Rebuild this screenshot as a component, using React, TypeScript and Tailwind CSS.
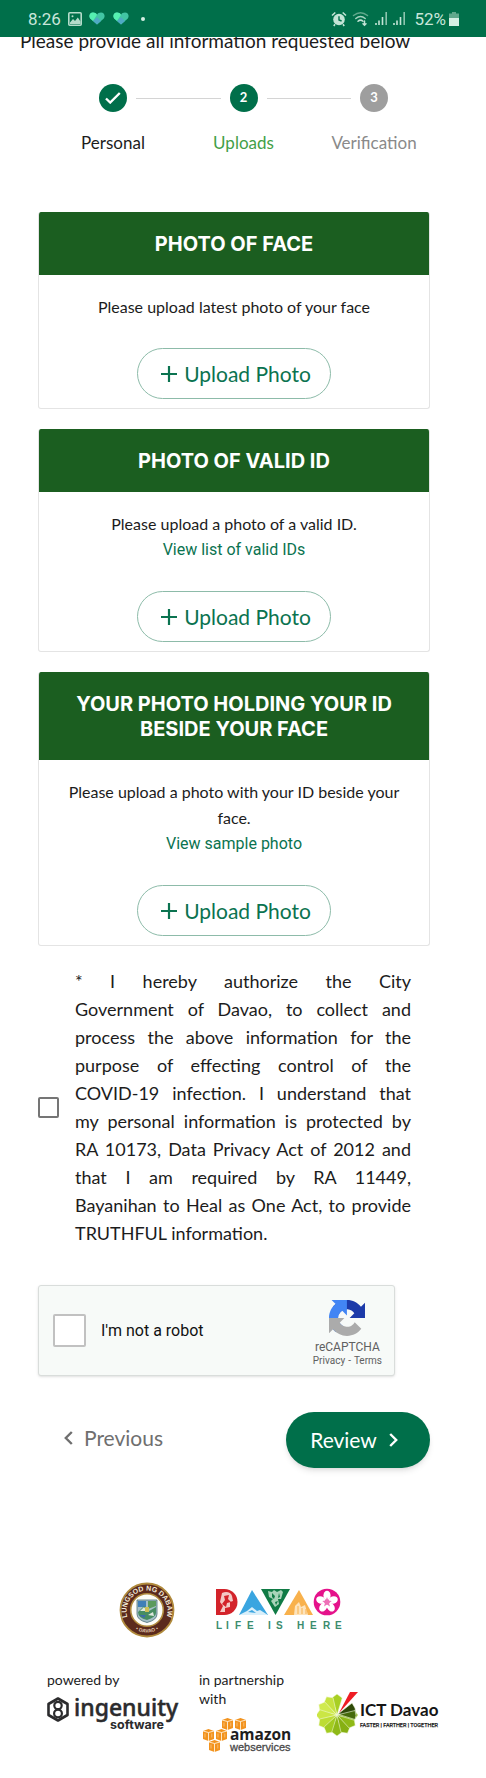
import type { ReactNode } from "react";

function StatusBar() {
  return (
    <header className="sticky top-0 z-10 flex h-[37px] items-center justify-between bg-[#006f4a] pl-7 pr-[27px] font-['Roboto',sans-serif] text-[17px] text-[#c9e6da]">
      <div className="flex items-center gap-[7px]">
        <span className="leading-5">8:26</span>
        <svg viewBox="0 0 14 14" className="h-[14px] w-[14px]" aria-hidden="true">
          <rect x="0.8" y="0.8" width="12.4" height="12.4" rx="1" fill="none" stroke="#b5dccb" strokeWidth="1.6" />
          <path d="M2 10.5 5 7l2 2 2.800-3.500L12.500 9.500V12H2z" fill="#b5dccb" />
          <circle cx="4.500" cy="4.300" r="1" fill="#b5dccb" />
        </svg>
        <HeartIcon />
        <HeartIcon />
        <span className="ml-1 h-1 w-1 rounded-full bg-[#d5efe4]" />
      </div>
      <div className="flex items-center gap-[5px]">
        <svg viewBox="0 0 16 16" className="h-4 w-4" aria-hidden="true">
          <circle cx="8" cy="8.500" r="5.800" fill="#c3e4d6" />
          <path d="M1 4.500 4.300 1.500M15 4.500 11.700 1.500M4 13.300 2.800 15M12 13.300 13.200 15" stroke="#c3e4d6" strokeWidth="1.600" />
          <path d="M8 5.200V9l2.600 1" fill="none" stroke="#006f4a" strokeWidth="1.400" />
        </svg>
        <svg viewBox="0 0 18 16" className="h-4 w-[18px]" fill="none" strokeLinecap="round" aria-hidden="true">
          <path d="M1.500 4.500Q8.500-1 15.500 4.500" stroke="#5fa88c" strokeWidth="1.500" />
          <path d="M3.800 7.500Q8.500 3.500 13.200 7.500" stroke="#a5d3c0" strokeWidth="1.500" />
          <path d="M6 10.300Q8.500 8 11 10.300" stroke="#c3e4d6" strokeWidth="1.500" />
          <path d="M12.500 10v4m-1.500-1.300 1.500 1.500 1.500-1.500" stroke="#c3e4d6" strokeWidth="1.500" />
        </svg>
        <SignalIcon />
        <SignalIcon />
        <span className="ml-[3px] leading-5">52%</span>
        <svg viewBox="0 0 10 14" className="-ml-[2px] h-[14px] w-[10px]" aria-hidden="true">
          <path d="M3 0h4v1.500h3V14H0V1.500h3z" fill="#5fa88c" />
          <path d="M0 6h10v8H0z" fill="#d5efe4" />
        </svg>
      </div>
    </header>
  );
}

function HeartIcon() {
  return (
    <svg viewBox="0 0 16 13" className="mr-px h-[13px] w-4" aria-hidden="true">
      <path d="M8 12.500 1.200 6.400C-.6 4 .8.500 4 .5c1.800 0 3.200.9 4 2.200C8.800 1.400 10.200.5 12 .5c3.200 0 4.600 3.500 2.800 5.900z" fill="#42c5a4" />
      <path d="M8 2.700C7.200 1.400 5.800.5 4 .5.800.5-.6 4 1.200 6.400L4 9z" fill="#55f0b0" />
      <path d="M4 9 8 5.200 12 9l-4 3.500z" fill="#4fa9c4" />
    </svg>
  );
}

function SignalIcon() {
  return (
    <svg viewBox="0 0 13 13" className="h-[13px] w-[13px]" aria-hidden="true">
      <path d="M1 11v2M4 8.500V13M7.500 5v8" stroke="#c3e4d6" strokeWidth="1.600" />
      <path d="M11.200 0v13" stroke="#8cc4ae" strokeWidth="1.600" />
    </svg>
  );
}

type StepProps = { label: string; circle: string; text: string; children: ReactNode };

function Step({ label, circle, text, children }: StepProps) {
  return (
    <li className="flex w-[84px] flex-col items-center">
      <span className={`flex h-7 w-7 items-center justify-center rounded-full text-[13px] font-bold text-white ${circle}`}>
        {children}
      </span>
      <span className={`mt-[19px] text-[17px] leading-6 ${text}`}>{label}</span>
    </li>
  );
}

function Stepper() {
  const line = "mt-[14px] -mx-[19px] h-px flex-1 bg-[#d4d4d4]";
  return (
    <ol className="mt-[30px] flex pl-[71px] pr-[70px]">
      <Step label="Personal" circle="bg-[#006f4a]" text="text-[#1c1c1c]">
        <svg viewBox="0 0 16 12" className="h-3 w-4" aria-hidden="true">
          <path d="m1 6.500 4.200 4L14.800 1" fill="none" stroke="white" strokeWidth="2.400" />
        </svg>
      </Step>
      <li aria-hidden="true" className={line} />
      <Step label="Uploads" circle="bg-[#006f4a]" text="text-[#43a047]">2</Step>
      <li aria-hidden="true" className={line} />
      <Step label="Verification" circle="bg-[#9e9e9e]" text="text-[#8a8a8a]">3</Step>
    </ol>
  );
}

type UploadCardProps = { title: string; text: string; link?: string };

function UploadCard({ title, text, link }: UploadCardProps) {
  return (
    <section className="overflow-hidden rounded-[3px] border border-t-0 border-[#e4e4e4]">
      <h2 className="bg-[#1b5e20] px-5 pb-[18px] pt-5 text-center font-['Inter',sans-serif] text-[20px] font-bold leading-[25px] text-white">
        {title}
      </h2>
      <div className="flex flex-col items-center px-5 pb-[9px] pt-[19px] text-center text-[16px] leading-[26px] text-[#1c1c1c]">
        <p>{text}</p>
        {link && (
          <a href="#" className="font-['Roboto',sans-serif] text-[#0b7350]">
            {link}
          </a>
        )}
        <button type="button" className="mt-7 flex h-[51px] w-[194px] items-center justify-center gap-[7px] rounded-full border border-[#8dbba9] pl-1 text-[21px] text-[#0b7350]">
          <svg viewBox="0 0 16 16" className="h-4 w-4" aria-hidden="true">
            <path d="M8 0v16M0 8h16" stroke="#0b7350" strokeWidth="2.200" />
          </svg>
          Upload Photo
        </button>
      </div>
    </section>
  );
}

function Recaptcha() {
  return (
    <div className="mt-[38px] flex h-[91px] max-w-[357px] items-center rounded-[3px] border border-[#d9dddb] bg-[#f7faf8] pl-[14px] pr-3 font-['Roboto',sans-serif] shadow-sm">
      <input id="robot" type="checkbox" className="h-[33px] w-[33px] appearance-none rounded-[2px] border-2 border-[#c1c1c1] bg-white" />
      <label htmlFor="robot" className="ml-[15px] flex-1 text-[16px] text-[#111]">I'm not a robot</label>
      <div className="flex flex-col items-center pt-[5px] text-[#606060]">
        <svg viewBox="0 0 64 64" className="h-9 w-9" aria-hidden="true">
          <path fill="#1c3aa9" d="M64 31.955l-.033-1.370V4.687l-7.160 7.160C50.948 4.674 42.033.093 32.050.093c-10.400 0-19.622 4.960-25.458 12.640l11.736 11.860a15.550 15.550 0 0 1 4.754-5.334c2.050-1.600 4.952-2.906 8.968-2.906.485 0 .860.057 1.135.163 4.976.393 9.288 3.140 11.828 7.124l-8.307 8.307L64 31.953" />
          <path fill="#4285f4" d="M31.862.094l-1.370.033H4.594l7.160 7.160C4.580 13.147 0 22.060 0 32.046c0 10.400 4.960 19.622 12.640 25.458L24.500 45.768a15.550 15.550 0 0 1-5.334-4.754c-1.600-2.050-2.906-4.952-2.906-8.968 0-.485.057-.860.163-1.135.393-4.976 3.140-9.288 7.124-11.828l8.307 8.307L31.860.095" />
          <path fill="#ababab" d="M.001 32.045l.033 1.370v25.898l7.160-7.160c5.860 7.173 14.774 11.754 24.760 11.754 10.400 0 19.622-4.960 25.458-12.640l-11.736-11.860a15.550 15.550 0 0 1-4.754 5.334c-2.050 1.600-4.952 2.906-8.968 2.906-.485 0-.860-.057-1.135-.163-4.976-.393-9.288-3.140-11.828-7.124l8.307-8.307c-10.522.040-22.400.066-27.295-.005" />
        </svg>
        <span className="mt-1 text-[12px] leading-[15px]">reCAPTCHA</span>
        <span className="flex gap-[3px] text-[10px] leading-3">
          <a href="#">Privacy</a>
          <span>-</span>
          <a href="#">Terms</a>
        </span>
      </div>
    </div>
  );
}

function CitySeal() {
  return (
    <svg viewBox="0 0 56 56" className="h-14 w-14" role="img" aria-label="Lungsod ng Dabaw">
      <defs>
        <path id="seal-top" d="M12 42A20.500 20.500 0 1 1 44 42" />
        <path id="seal-bottom" d="M12 44A23 23 0 0 0 44 44" />
      </defs>
      <circle cx="28" cy="28" r="26.500" fill="#5b2a1d" stroke="#b08a3c" strokeWidth="1.800" />
      <circle cx="28" cy="28" r="16.300" fill="#fdfdf8" stroke="#b08a3c" strokeWidth="1.600" />
      <text fill="#f3e9d8" fontSize="7" fontWeight="700" fontFamily="Liberation Sans">
        <textPath href="#seal-top" startOffset="50%" textAnchor="middle">LUNGSOD NG DABAW</textPath>
      </text>
      <text fill="#e3cdb4" fontSize="5" fontWeight="700" fontFamily="Liberation Sans">
        <textPath href="#seal-bottom" startOffset="50%" textAnchor="middle">• DAVAO •</textPath>
      </text>
      <path d="M18 18h20v14q0 6-10 8.500Q18 38 18 32z" fill="#a5c0c8" stroke="#4b6f77" strokeWidth=".8" />
      <path d="M19 19h8v6h-8z" fill="#3f7fb8" />
      <path d="M29 19h8v5l-8 3z" fill="#5b9a5c" />
      <path d="m19 30 6-6 5 5 7-4v6q0 4-9 7-9-2-9-8z" fill="#478d62" />
      <path d="m21 29 4-4 3 4zM29 33l5-3 1 4z" fill="#dfe8dd" />
      <path d="M26 25h4v5h-4z" fill="#cdbf55" />
      <path d="M20 33h7l-2 3z" fill="#3c6cab" />
    </svg>
  );
}

function DavaoLogo() {
  return (
    <svg viewBox="0 0 128 44" className="h-11 w-32" role="img" aria-label="Davao, life is here">
      <path d="M1 1h8.500a13 13 0 0 1 0 26H1z" fill="#d3232a" />
      <path d="M7 5c4-2 9-1 10 3l1 5-3 1v5l-5 1v4H5l3-6-3-4z" fill="#f3c9c6" />
      <path d="m9 8 5-1-1 4 3 3-4 1-1 4-4-3 3-4z" fill="#d3232a" />
      <path d="M37 2 53 27H24z" fill="#3aa5e0" />
      <path d="m24 27 8-4 5-4 5 4 3-1 8 5z" fill="#d9effa" />
      <path d="m33 24 4-2 4 3z" fill="#3aa5e0" />
      <path d="M46 1h29L60.500 27z" fill="#107b45" />
      <path d="m53 3 4 1 2-2 3 2 4-2 2 2-2 7h-3l1 5-4 3-4-6 2-2-4-2z" fill="#a9d3b8" />
      <path d="m57 5 3 3-1 3-2-2zM64 5l-1 5 2-1zM60 14l3-1-2 4z" fill="#107b45" />
      <path d="M84 2 98 27H69z" fill="#f8b14c" />
      <path d="m79 27 1-9 4-4 2 5 4-2 3 10z" fill="#fde3bb" />
      <path d="M83 18v8M87 20v6M91 21v5" stroke="#f8b14c" />
      <circle cx="112" cy="14" r="13.300" fill="#e5128b" />
      <g fill="#fff">
        <ellipse cx="112" cy="7.500" rx="3.600" ry="4.700" />
        <ellipse cx="112" cy="7.500" rx="3.600" ry="4.700" transform="rotate(72 112 14)" />
        <ellipse cx="112" cy="7.500" rx="3.600" ry="4.700" transform="rotate(144 112 14)" />
        <ellipse cx="112" cy="7.500" rx="3.600" ry="4.700" transform="rotate(216 112 14)" />
        <ellipse cx="112" cy="7.500" rx="3.600" ry="4.700" transform="rotate(288 112 14)" />
      </g>
      <path d="m112 9 1.300 3.500 3.500.5-2.800 2 1 3.500-3-2-3 2 1-3.500-2.800-2 3.500-.5z" fill="#ee70b7" />
      <g fill="#3b8c6d" fontSize="10" fontWeight="700" fontFamily="Liberation Sans">
        <text x="1 11 20 32" y="41">LIFE</text>
        <text x="53 61" y="41">IS</text>
        <text x="82 95 108 120" y="41">HERE</text>
      </g>
    </svg>
  );
}

function IngenuityLogo() {
  return (
    <svg viewBox="0 -8 136 44" className="h-11 w-[136px]" role="img" aria-label="ingenuity software">
      <g fill="none" stroke="#2b2b2d">
        <path d="M11 1.500 20.500 7v11L11 23.500 1.500 18V7z" strokeWidth="2.600" strokeLinejoin="round" />
        <circle cx="11" cy="8.500" r="3.700" strokeWidth="2.200" />
        <circle cx="11" cy="16.500" r="3.900" strokeWidth="2.200" />
      </g>
      <text x="27" y="19" fill="#2b2b2d" stroke="#2b2b2d" strokeWidth=".5" fontSize="23" fontWeight="500" fontFamily="Noto Sans">ingenuity</text>
      <text x="63" y="32" fill="#2b2b2d" fontSize="12.500" fontWeight="700" fontFamily="Inter">software</text>
    </svg>
  );
}

function Cube({ x, y }: { x: number; y: number }) {
  return (
    <g transform={`translate(${x} ${y})`}>
      <path d="M0 2 5.500 0 11 2v8l-5.500 2L0 10z" fill="#f2931e" />
      <path d="M0 2 5.500 3.500 11 2M5.500 3.500V12" fill="none" stroke="#fff0d8" strokeWidth=".9" />
      <path d="M2 4.500v4M8.800 4.500v4" stroke="#fbc887" strokeWidth=".8" />
    </g>
  );
}

function AwsLogo() {
  return (
    <svg viewBox="0 0 92 36" className="h-9 w-[92px]" role="img" aria-label="amazon web services">
      <Cube x={20} y={0} />
      <Cube x={33} y={0} />
      <Cube x={1} y={11} />
      <Cube x={14} y={11} />
      <Cube x={7} y={22} />
      <text x="28" y="22" fill="#1e1e1e" fontSize="15.500" fontWeight="700" fontFamily="Open Sans">amazon</text>
      <text x="28" y="33" fill="#4a4a4a" stroke="#4a4a4a" strokeWidth=".3" fontSize="11" fontFamily="Liberation Sans">webservices</text>
    </svg>
  );
}

function IctLogo() {
  const wedges = ["#a8cf23", "#c6e23f", "#d0ea4f", "#cbe645", "#bddc34", "#a3cb20", "#8fb917", "#86b012", "#8fb916", "#7fa80f"];
  return (
    <svg viewBox="0 0 130 48" className="h-12 w-[130px]" role="img" aria-label="ICT Davao">
      {wedges.map((color, i) => (
        <path
          key={i}
          d="M20 25 14.800 8 20 4l5.200 4z"
          fill={color}
          stroke="#f4fae0"
          strokeWidth=".5"
          transform={`rotate(${-30 * i} 20 25)`}
        />
      ))}
      <path d="m21 24 14-11 3 5 1 6-1 2z" fill="#2f4a08" stroke="#f4fae0" strokeWidth=".6" />
      <path d="m22 24.500 16-4 1 5-1 4z" fill="#45690b" stroke="#f4fae0" strokeWidth=".6" />
      <path d="M22 23 33 2h8z" fill="#ee1c24" />
      <text x="43" y="26" fill="#151515" fontSize="17" fontWeight="700" fontFamily="Lato">ICT Davao</text>
      <text x="43" y="37" fill="#151515" stroke="#151515" strokeWidth=".25" fontSize="5.500" fontFamily="Roboto">FASTER | FARTHER | TOGETHER</text>
    </svg>
  );
}

export default function App() {
  return (
    <div className="min-h-screen bg-white font-['Lato',sans-serif] text-[#1c1c1c]">
      <StatusBar />
      <main className="-mt-[10px]">
        <p className="px-5 text-[19px] leading-[27px]">Please provide all information requested below</p>
        <Stepper />
        <form className="pl-[38px] pr-14 pt-[57px]" onSubmit={(e) => e.preventDefault()}>
          <div className="flex flex-col gap-5">
            <UploadCard title="PHOTO OF FACE" text="Please upload latest photo of your face" />
            <UploadCard title="PHOTO OF VALID ID" text="Please upload a photo of a valid ID." link="View list of valid IDs" />
            <UploadCard
              title="YOUR PHOTO HOLDING YOUR ID BESIDE YOUR FACE"
              text="Please upload a photo with your ID beside your face."
              link="View sample photo"
            />
          </div>
          <div className="mt-[21px] flex items-center gap-4 pr-[19px]">
            <input id="consent" type="checkbox" className="h-[21px] w-[21px] shrink-0 appearance-none rounded-[2px] border-2 border-[#757575] bg-white" />
            <label htmlFor="consent" className="text-justify text-[18px] leading-[28px]">
              * I hereby authorize the City Government&nbsp;of Davao, to collect and process&nbsp;the above information
              for the purpose&nbsp;of effecting control of the COVID-19&nbsp;infection. I understand that
              my&nbsp;personal information is protected by RA&nbsp;10173, Data Privacy Act of 2012 and
              that&nbsp;I&nbsp;am required by RA 11449, Bayanihan&nbsp;to Heal as One Act, to provide
              TRUTHFUL&nbsp;information.
            </label>
          </div>
          <Recaptcha />
          <div className="mt-9 flex items-center justify-between pl-[26px]">
            <button type="button" className="flex items-center gap-[11px] pb-1 text-[21px] text-[#6f6f6f]">
              <svg viewBox="0 0 9 14" className="h-[14px] w-[9px]" aria-hidden="true">
                <path d="M7.800 1 1.800 7l6 6" fill="none" stroke="#6f6f6f" strokeWidth="2.400" />
              </svg>
              Previous
            </button>
            <button type="submit" className="flex h-14 w-36 items-center justify-center gap-3 rounded-full bg-[#006f4a] pr-2 text-[21px] text-white shadow-md">
              Review
              <svg viewBox="0 0 9 14" className="h-[14px] w-[9px]" aria-hidden="true">
                <path d="m1.200 1 6 6-6 6" fill="none" stroke="white" strokeWidth="2.400" />
              </svg>
            </button>
          </div>
        </form>
      </main>
      <footer className="pt-[114px]">
        <div className="flex items-center gap-10 pl-[119px]">
          <CitySeal />
          <DavaoLogo />
        </div>
        <div className="mt-8 flex pl-[47px] text-[14px] leading-[19px]">
          <div className="w-[152px]">
            <p>powered by</p>
            <IngenuityLogo />
          </div>
          <div className="w-[118px]">
            <p className="w-[90px]">in partnership with</p>
            <div className="mt-[10px] pl-[3px]">
              <AwsLogo />
            </div>
          </div>
          <div className="pt-5">
            <IctLogo />
          </div>
        </div>
      </footer>
    </div>
  );
}
